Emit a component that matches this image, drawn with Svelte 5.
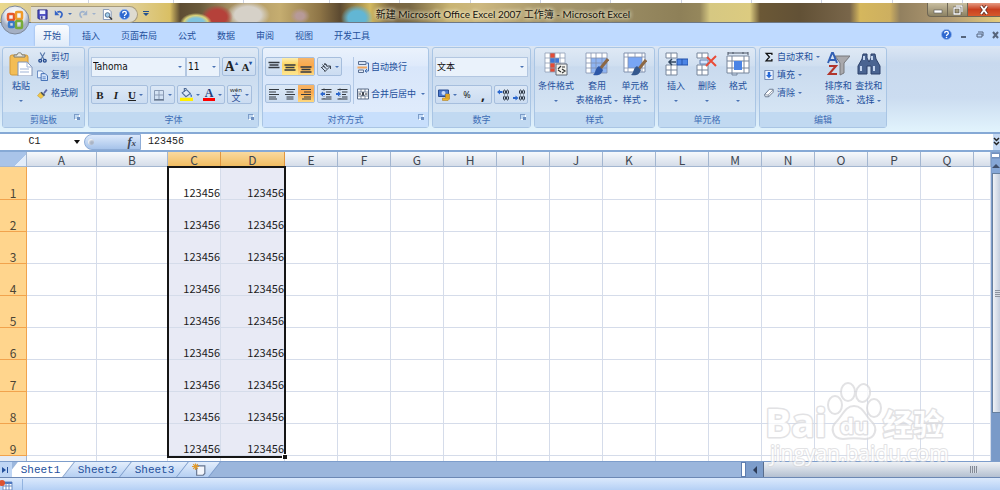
<script>
  const menus = ['开始', '插入', '页面布局', '公式', '数据', '审阅', '视图', '开发工具'];
  const letters = 'ABCDEFGHIJKLMNOPQ'.split('');
  const rows = [1, 2, 3, 4, 5, 6, 7, 8, 9];
  const picked = ['C', 'D'];
  const sheets = ['Sheet1', 'Sheet2', 'Sheet3'];

  let menu = $state('开始');
  let sheet = $state('Sheet1');
  let font = $state('Tahoma');
  let size = $state('11');
  let format = $state('文本');
  let cellName = $state('C1');
  let formula = $state('123456');
</script>

{#snippet icon(name, w = 12)}
  <svg class="icon" width={w} height={w} viewBox="0 0 24 24" fill="none" aria-hidden="true">
    {#if name === 'save'}
      <path d="M2 2h20v20H4l-2-2z" fill="#4d4fc4" stroke="#25257c" stroke-width="2" />
      <path d="M6 3h12v8H6z" fill="#eef3ff" /><path d="M7 15h11v7H7z" fill="#d8dcf0" /><path d="M9 16h3v5H9z" fill="#25257c" />
    {:else if name === 'undo'}
      <path d="M8 8c9-5 16 4 7 13" stroke="#3564c6" stroke-width="4" /><path d="M2 3v12h11z" fill="#3564c6" />
    {:else if name === 'redo'}
      <path d="M16 8C7 3 0 12 9 21" stroke="#9fb2cc" stroke-width="4" /><path d="M22 3v12H11z" fill="#9fb2cc" />
    {:else if name === 'preview'}
      <path d="M3 1h12l5 5v17H3z" fill="#fff" stroke="#7c90b4" stroke-width="2" />
      <circle cx="12" cy="13" r="5" fill="#a6d0ec" stroke="#4b6a8e" stroke-width="2" /><path d="m16 17 6 6" stroke="#333" stroke-width="3" />
    {:else if name === 'help'}
      <circle cx="12" cy="12" r="11" fill="#2d68d0" stroke="#8fb4ec" stroke-width="2" />
      <path d="M8 9c0-5 8-5 8 0 0 3-4 3-4 6" stroke="#fff" stroke-width="3" /><circle cx="12" cy="18.500" r="1.800" fill="#fff" />
    {:else if name === 'paste'}
      <rect x="1" y="3" width="18" height="20" rx="2" fill="#f3bd55" stroke="#d39a3b" />
      <path d="M5 5V3h3c0-3 5-3 5 0h3v2z" fill="#e8e8e0" stroke="#7b7b72" />
      <path d="M9 10h9l5 5v9H9z" fill="#fff" stroke="#8094b8" /><path d="M18 10v5h5M11 17h9M11 20h9" stroke="#9fb3d6" />
    {:else if name === 'cut'}
      <path d="m7 1 8 15M17 1 9 16" stroke="#5677aa" stroke-width="2.500" />
      <circle cx="7" cy="19" r="3" stroke="#244a8f" stroke-width="3" /><circle cx="17" cy="19" r="3" stroke="#244a8f" stroke-width="3" />
    {:else if name === 'copy'}
      <path d="M1 2h9l4 4v11H1z" fill="#eef5ff" stroke="#5e83bd" stroke-width="2" />
      <path d="M9 8h9l5 5v10H9z" fill="#d6e5fb" stroke="#3565af" stroke-width="2" /><path d="M12 15h7M12 19h7" stroke="#5180c6" stroke-width="2" />
    {:else if name === 'brush'}
      <path d="m14 10 6-8 3 3-7 8z" fill="#5a64a8" /><path d="m10 8 8 7-3 3-8-7z" fill="#45505e" /><path d="m7 10 7 8-5 5-8-6z" fill="#f2c849" stroke="#b98d24" />
    {:else if name === 'borders'}
      <path d="M3 3h18v18H3zM12 3v18M3 12h18" stroke="#8a9bb5" stroke-width="2" /><path d="M2 22h20" stroke="#46566e" stroke-width="2" />
    {:else if name === 'fill'}
      <path d="m4 9 8-6 7 7-8 6z" fill="#dce8f8" stroke="#4d6a96" stroke-width="2" /><path d="M8 7V1h4" stroke="#4d6a96" stroke-width="2" />
      <path d="M19 10c4 3 4 6 1 7z" fill="#2f63bb" /><path d="M0 18h24v6H0z" fill="#ffef00" />
    {:else if name === 'bars-top' || name === 'bars-mid' || name === 'bars-bottom'}
      <g transform="translate(0 {name === 'bars-top' ? 0 : name === 'bars-mid' ? 5 : 9})">
        <path d="M1 3h22M3 8h18M1 13h22" stroke="#333940" stroke-width="3" />
      </g>
    {:else if name === 'left'}
      <path d="M2 3h20M2 8h14M2 13h20M2 18h14M2 22h16" stroke="#333940" stroke-width="2.200" />
    {:else if name === 'center'}
      <path d="M2 3h20M5 8h14M2 13h20M5 18h14M5 22h14" stroke="#333940" stroke-width="2.200" />
    {:else if name === 'right'}
      <path d="M2 3h20M8 8h14M2 13h20M8 18h14M4 22h18" stroke="#333940" stroke-width="2.200" />
    {:else if name === 'angle'}
      <path d="m2 12 8 8M5 7l8 9M9 4l6 8M3 14c2-4 5-4 6-1M8 8c3-3 5-2 6 1" stroke="#3c444f" stroke-width="2" /><path d="m9 22 12-12M21 10v6M21 10h-6" stroke="#3c444f" stroke-width="2" />
    {:else if name === 'outdent' || name === 'indent'}
      <path d="M3 3h20M12 8h11M12 13h8M12 18h11M3 22h20" stroke="#333940" stroke-width="2.400" /><path d="M8 0v24" stroke="#333940" stroke-dasharray="2 2" />
      {#if name === 'outdent'}<path d="M0 12 6 7v3h4v4H6v3z" fill="#2b67cd" />{:else}<path d="m10 12-6-5v3H0v4h4v3z" fill="#2b67cd" />{/if}
    {:else if name === 'wrap'}
      <path d="M3 1h15v6H3z" fill="#d9e4f5" stroke="#5a6f91" stroke-width="2" /><path d="M1 11h19v4H1z" fill="#f1a65f" /><path d="M3 18h10v5H3z" fill="#e7eefa" stroke="#5a6f91" stroke-width="2" />
      <path d="M19 4h4v16h-7m4-4-4 4 4 3" stroke="#416cae" stroke-width="2" />
    {:else if name === 'merge'}
      <path d="M1 2h22v20H1z" fill="#fff" stroke="#596b87" stroke-width="2" /><path d="M1 8h22M1 16h22M8 2v6M16 2v6M8 16v6M16 16v6" stroke="#596b87" stroke-width="1.500" />
      <path d="m10 16 2-8 2 8M3 12h5m8 0h5" stroke="#222b38" stroke-width="2" />
    {:else if name === 'money'}
      <path d="M1 2h20v13H1z" fill="#4b79cd" stroke="#294d91" stroke-width="2" /><circle cx="11" cy="8" r="4" fill="#cbdcf7" />
      <path d="M15 10h8v10l-3 3H9v-5h6z" fill="#efb62e" stroke="#a6761a" /><path d="M15 14h8M15 18h8" stroke="#a6761a" />
    {:else if name === 'inc' || name === 'dec'}
      {#if name === 'inc'}
        <path d="m0 6 6-5v3h5v4H6v3z" fill="#2b67cd" />
      {:else}
        <path d="m11 18-6-5v3H0v4h5v3z" fill="#2b67cd" />
      {/if}
      <g stroke="#222c3a" stroke-width="2">
        <ellipse cx="15" cy="6" rx="2" ry="4" /><ellipse cx="21" cy="6" rx="2" ry="4" /><ellipse cx="15" cy="18" rx="2" ry="4" /><ellipse cx="21" cy="18" rx="2" ry="4" />
      </g>
    {:else if name === 'conditional'}
      <path d="M1 1h20v19H1z" fill="#fff" /><path d="M6 1h5v19H6z" fill="#e44b35" /><path d="M6 6h9v5H6z" fill="#3f76d6" />
      <path d="M1 1h20v19H1zM1 6h20M1 11h20M1 16h20M6 1v19M11 1v19M16 1v19" stroke="#8d9cb4" stroke-width=".8" />
      <path d="M12 12h11v11H12z" fill="#f3f3ee" stroke="#5e6675" /><path d="m14 17 3-3M14 18l3 2M18 15h3M18 17l3 2-3 2" stroke="#333" stroke-width="1.200" />
    {:else if name === 'table-style'}
      <path d="M1 1h21v20H1z" fill="#fff" /><path d="M6 6h16v15H6z" fill="#8fb4f2" /><path d="M1 1h21v20H1zM1 6h21M1 11h21M1 16h21M6 1v20M11 1v20M17 1v20" stroke="#8090ad" stroke-width=".8" />
      <path d="m23 7-8 10" stroke="#8c6844" stroke-width="3" /><path d="m14 14 4 4c-2 5-5 6-10 5 3-2 2-7 6-9z" fill="#2d57a7" />
    {:else if name === 'cell-style'}
      <path d="M1 1h21v19H1z" fill="#fff" stroke="#8090ad" /><path d="M5 5h14v11H5z" fill="#79a6f4" /><path d="M1 5h21M1 16h21M5 1v19M12 1v4M19 1v19M12 16v4" stroke="#8090ad" stroke-width=".8" />
      <path d="m23 8-8 10" stroke="#8c6844" stroke-width="3" /><path d="m14 14 4 4c-2 5-5 6-10 5 3-2 2-7 6-9z" fill="#34588e" />
    {:else if name === 'insert' || name === 'delete'}
      <path d="M2 1h11v5H2zM2 13h11v10H2zM7 1v5M7 13v10M2 18h11" fill="#fff" stroke="#77859b" />
      {#if name === 'insert'}
        <path d="M13 7h11v6H13z" fill="#4b84e5" stroke="#2553ab" /><path d="M18 7v6" stroke="#2553ab" /><path d="M12 10H6m2-3-3 3 3 3" stroke="#30455f" stroke-width="1.500" />
      {:else}
        <path d="M5 8h8v4H5z" fill="#d6e4fb" stroke="#6682b1" /><path d="m12 5 9 9M21 4l-10 10" stroke="#e94c38" stroke-width="2" />
      {/if}
    {:else if name === 'format'}
      <path d="M2 1h20M2 0v3M22 0v3M7 0v2M17 0v2" stroke="#4b5565" /><path d="M1 4h22v17H1z" fill="#fff" stroke="#77859b" /><path d="M6 4v19h5v-2M18 4v17M1 9h22M1 16h22" stroke="#77859b" />
      <path d="M8 9h8v9H8z" fill="#4b84e5" />
    {:else if name === 'sum'}
      <path d="M19 7V3H5l8 9-8 9h14v-4" stroke="#111" stroke-width="3" />
    {:else if name === 'fill-down'}
      <path d="M2 1h20v22H2z" fill="#eaf2ff" stroke="#5974a4" stroke-width="2" /><path d="M9 5h6v7h4l-7 8-7-8h4z" fill="#2568d9" />
    {:else if name === 'eraser'}
      <path d="M13 3h9v7L11 21H3l-2-5z" fill="#fff" stroke="#54657f" stroke-width="2" /><path d="m2 16 8 1 2 4M10 17 21 5" stroke="#54657f" stroke-width="1.500" />
    {:else if name === 'sort'}
      <path d="M9 4h15l-6 7v10l-4 2V11z" fill="#a9a9ad" stroke="#77787d" />
      <path d="m2 11 4-10h1l4 10M4 8h5" stroke="#315fb3" stroke-width="2" /><path d="M3 14h7L3 22h8" stroke="#b1352c" stroke-width="2" />
    {:else if name === 'find'}
      <path d="M6 2h4v4l2 4 2-4V2h4l1 5 4 7v8h-9v-8h-4v8H1v-8l4-7z" fill="#4a6491" stroke="#2c416b" /><path d="M7 4v4M4 14v5M15 4v4M17 14v5" stroke="#c5d6f0" stroke-width="2" />
    {:else if name === 'new-sheet'}
      <path d="M8 5h14v13l-3 3H8z" fill="#f3f6fc" stroke="#66758f" stroke-width="2" /><path d="M6 1v11M0 6h12M2 2l8 8M10 2l-8 8" stroke="#e09a2c" stroke-width="2" />
    {/if}
  </svg>
{/snippet}

{#snippet big(name, label, second)}
  <button class="big">
    {@render icon(name, 24)}
    <span>{label}</span>
    {#if second}<span>{second} <i class="arrow"></i></span>{:else}<span><i class="arrow"></i></span>{/if}
  </button>
{/snippet}

<div class="window">
  <div class="strip">
    <svg width="100%" height="3" aria-hidden="true">
      {#each [88, 173, 243, 329, 399, 470, 540, 610, 681, 751, 821, 892, 962] as x}
        <rect {x} width="1" height="3" fill="#cdd3e4" />
      {/each}
    </svg>
  </div>

  <header>
    <div class="quick">
      <div class="tools">
        <button aria-label="保存">{@render icon('save', 11)}</button>
        <button aria-label="撤销">{@render icon('undo', 10)}<i class="arrow"></i></button>
        <button aria-label="恢复">{@render icon('redo', 10)}<i class="arrow pale"></i></button>
        <button aria-label="打印预览">{@render icon('preview', 11)}</button>
        <button aria-label="帮助">{@render icon('help', 11)}</button>
      </div>
      <button class="more" aria-label="自定义"><i class="arrow"></i></button>
    </div>
    <h1>新建 Microsoft Office Excel 2007 工作簿 - Microsoft Excel</h1>
    <div class="controls">
      <button aria-label="最小化"><svg width="10" height="8"><rect x="1" y="4" width="8" height="3" fill="#fff" stroke="#555" stroke-width=".6" /></svg></button>
      <button aria-label="还原"><svg width="10" height="10" fill="none"><path d="M3 1h6v6M1 3h6v6H1z" stroke="#4d4a42" stroke-width="2.600" /><path d="M3 1h6v6M1 3h6v6H1z" stroke="#fff" stroke-width="1.300" /></svg></button>
      <button class="close" aria-label="关闭"><svg width="10" height="10"><path d="m2 1 6 8M8 1 2 9" stroke="#5b2a20" stroke-width="3.400" /><path d="m2 1 6 8M8 1 2 9" stroke="#fff" stroke-width="2" /></svg></button>
    </div>
    <button class="orb" aria-label="Office">
      <svg width="30" height="30" viewBox="0 0 30 30">
        <defs><radialGradient id="orb" cy=".3"><stop offset="0" stop-color="#fff" /><stop offset=".7" stop-color="#e2e6ee" /><stop offset="1" stop-color="#a5b0c4" /></radialGradient></defs>
        <circle cx="15" cy="15" r="14" fill="url(#orb)" stroke="#7d8899" />
        <g fill="none" stroke-width="2.500">
          <rect x="8" y="9" width="6" height="6" rx="1" stroke="#e5562a" /><rect x="16" y="7" width="6" height="7" rx="1" stroke="#ef9a2b" />
          <rect x="9" y="17" width="5" height="5" rx="1" stroke="#3a79c8" /><rect x="16" y="16" width="6" height="7" rx="1" stroke="#77ab3a" />
        </g>
      </svg>
    </button>
  </header>

  <nav>
    {#each menus as name}
      <button class:active={menu === name} onclick={() => (menu = name)}>{name}</button>
    {/each}
    <div class="book">
      <button aria-label="帮助">{@render icon('help', 11)}</button>
      <button aria-label="最小化窗口"><svg width="8" height="8"><path d="M1 6h5" stroke="#56657c" stroke-width="2" /></svg></button>
      <button aria-label="还原窗口"><svg width="8" height="8" fill="none" stroke="#56657c"><path d="M2 1h5v4M1 3h5v3H1z" /></svg></button>
      <button aria-label="关闭窗口"><svg width="8" height="8"><path d="m1 1 5 6M6 1 1 7" stroke="#56657c" stroke-width="2" /></svg></button>
    </div>
  </nav>

  <div class="ribbon">
    <section class="clipboard">
      <div class="body">
        {@render big('paste', '粘贴')}
        <div class="list">
          <button>{@render icon('cut', 11)}剪切</button>
          <button>{@render icon('copy', 11)}复制</button>
          <button>{@render icon('brush', 11)}格式刷</button>
        </div>
      </div>
      <h2>剪贴板<i class="launcher"></i></h2>
    </section>

    <section class="font">
      <div class="body lines">
        <div class="line">
          <div class="selects">
            <label class="select wide"><select aria-label="字体" bind:value={font}><option>Tahoma</option></select></label>
            <label class="select"><select aria-label="字号" bind:value={size}><option>11</option></select></label>
          </div>
          <div class="set"><button class="serif large">A<sup>▴</sup></button><button class="serif">A<sup>▾</sup></button></div>
        </div>
        <div class="line">
          <div class="set"><button class="serif"><b>B</b></button><button class="serif"><em>I</em></button><button class="serif under"><u>U</u><i class="arrow"></i></button></div>
          <div class="set"><button class="drop" aria-label="边框">{@render icon('borders')}<i class="arrow"></i></button></div>
          <div class="set"><button class="drop" aria-label="填充颜色">{@render icon('fill', 13)}<i class="arrow"></i></button><button class="drop serif"><span class="red">A</span><i class="arrow"></i></button></div>
          <div class="set"><button class="drop pinyin"><span><small>wén</small>文</span><i class="arrow"></i></button></div>
        </div>
      </div>
      <h2>字体<i class="launcher"></i></h2>
    </section>

    <section class="align hot">
      <div class="body split">
        <div class="lines">
          <div class="line">
            <div class="set"><button aria-label="顶端对齐">{@render icon('bars-top')}</button><button class="lit" aria-label="垂直居中">{@render icon('bars-mid')}</button><button class="on" aria-label="底端对齐">{@render icon('bars-bottom')}</button></div>
            <div class="set"><button class="drop" aria-label="方向">{@render icon('angle')}<i class="arrow"></i></button></div>
          </div>
          <div class="line">
            <div class="set"><button aria-label="左对齐">{@render icon('left')}</button><button aria-label="居中">{@render icon('center')}</button><button class="on" aria-label="右对齐">{@render icon('right')}</button></div>
            <div class="set"><button aria-label="减少缩进">{@render icon('outdent')}</button><button aria-label="增加缩进">{@render icon('indent')}</button></div>
          </div>
        </div>
        <div class="wrap">
          <button>{@render icon('wrap')}自动换行</button>
          <button>{@render icon('merge')}合并后居中<i class="arrow"></i></button>
        </div>
      </div>
      <h2>对齐方式<i class="launcher"></i></h2>
    </section>

    <section class="number">
      <div class="body lines">
        <label class="select full"><select aria-label="数字格式" bind:value={format}><option>文本</option></select></label>
        <div class="line">
          <div class="set"><button class="drop" aria-label="会计格式">{@render icon('money')}<i class="arrow"></i></button><button>%</button><button class="comma">,</button></div>
          <div class="set"><button aria-label="增加小数位数">{@render icon('inc')}</button><button aria-label="减少小数位数">{@render icon('dec')}</button></div>
        </div>
      </div>
      <h2>数字<i class="launcher"></i></h2>
    </section>

    <section class="styles">
      <div class="body">
        {@render big('conditional', '条件格式')}
        {@render big('table-style', '套用', '表格格式')}
        {@render big('cell-style', '单元格', '样式')}
      </div>
      <h2>样式</h2>
    </section>

    <section class="cells">
      <div class="body">
        {@render big('insert', '插入')}
        {@render big('delete', '删除')}
        {@render big('format', '格式')}
      </div>
      <h2>单元格</h2>
    </section>

    <section class="editing">
      <div class="body">
        <div class="list">
          <button>{@render icon('sum', 10)}自动求和<i class="arrow"></i></button>
          <button>{@render icon('fill-down', 10)}填充<i class="arrow"></i></button>
          <button>{@render icon('eraser', 10)}清除<i class="arrow"></i></button>
        </div>
        {@render big('sort', '排序和', '筛选')}
        {@render big('find', '查找和', '选择')}
      </div>
      <h2>编辑</h2>
    </section>
  </div>

  <div class="formula">
    <input class="name" aria-label="名称框" bind:value={cellName} />
    <i class="arrow dark"></i>
    <div class="fx"><span class="knob"></span><em>f<small>x</small></em></div>
    <input class="value" aria-label="编辑栏" bind:value={formula} />
    <button class="expand" aria-label="展开编辑栏"><svg width="7" height="10" fill="none" stroke="#222" stroke-width="1.500"><path d="m1 1 2.500 2.500L6 1M1 5l2.500 2.500L6 5" /></svg></button>
  </div>

  <main>
    <div class="sheet">
      <table>
        <colgroup>
          <col class="head" /><col class="a" /><col class="b" /><col class="c" /><col class="d" />
          {#each letters.slice(4) as letter (letter)}<col class="plain" />{/each}
          <col />
        </colgroup>
        <thead>
          <tr>
            <th class="corner"></th>
            {#each letters as letter}<th class:picked={picked.includes(letter)}>{letter}</th>{/each}
            <th></th>
          </tr>
        </thead>
        <tbody>
          {#each rows as row}
            <tr>
              <th>{row}</th>
              {#each letters as letter}
                <td class:picked={picked.includes(letter)} class:current={row === 1 && letter === 'C'}>{picked.includes(letter) ? '123456' : ''}</td>
              {/each}
              <td></td>
            </tr>
          {/each}
          <tr class="rest"><th></th>{#each letters as letter (letter)}<td></td>{/each}<td></td></tr>
        </tbody>
      </table>
      <div class="selection"></div>
    </div>
    <div class="vscroll">
      <div class="splitter"></div>
      <button aria-label="向上滚动"><i class="up"></i></button>
      <div class="thumb"><span></span></div>
      <div class="track"></div>
    </div>
  </main>

  <footer>
    <div class="sheets">
      <button class="last" aria-label="最后一张"><svg width="8" height="8"><path d="M0 1v6l4-3zM5 1h1v6H5z" fill="#24509c" /></svg></button>
      {#each sheets as name}
        <button class="tab" class:active={sheet === name} onclick={() => (sheet = name)}>{name}</button>
      {/each}
      <button class="tab new" aria-label="插入工作表">{@render icon('new-sheet', 14)}</button>
    </div>
    <div class="hscroll">
      <div class="grab"></div>
      <button aria-label="向左滚动"><i class="back"></i></button>
      <div class="thumb"><span></span></div>
    </div>
  </footer>
  <div class="status">
    <svg width="14" height="11" aria-hidden="true"><path d="M3 3h9v8H3z" fill="#fff" stroke="#6d8dc2" /><path d="M3 3h9v2H3z" fill="#4c76c0" /><path d="M6 4v7M9 4v7M3 7h9" stroke="#6d8dc2" /><circle cx="2" cy="4" r="3" fill="#dd5330" /></svg>
  </div>

  <svg class="watermark" width="190" height="90" viewBox="0 0 190 90">
    <g fill="#fff" stroke="#d9d9dc" stroke-width="2">
      <ellipse cx="71" cy="25" rx="7" ry="9" /><ellipse cx="84" cy="12" rx="7" ry="9" /><ellipse cx="99" cy="13" rx="7" ry="9" transform="rotate(12 99 13)" /><ellipse cx="110" cy="28" rx="7" ry="9" />
      <path d="M90 26c-9 0-11 9-17 15-8 7-4 18 6 18 8-1 14-1 22 0 10 0 14-11 6-18-6-6-8-15-17-15z" />
    </g>
    <g fill="#fff" stroke="#d9d9dc" stroke-width="3" paint-order="stroke" stroke-linejoin="round" font-weight="700">
      <text x="1" y="57" font-family="Open Sans, sans-serif" font-size="39">Bai</text>
      <text x="76" y="54" font-family="Open Sans, sans-serif" font-size="22">du</text>
      <text x="119" y="55" font-family="Noto Sans CJK SC, sans-serif" font-size="30">经验</text>
      <text x="6" y="81" font-family="Open Sans, sans-serif" font-size="21" font-weight="400" stroke-width="2">jingyan.baidu.com</text>
    </g>
  </svg>
</div>

<style>
  :global(body) {
    margin: 0;
  }
  .window {
    position: relative;
    display: flex;
    flex-direction: column;
    height: 100vh;
    overflow: hidden;
    font-family: 'Noto Sans', 'Noto Sans CJK SC', sans-serif;
    font-size: 9px;
    line-height: 14px;
    color: #24509c;
    background: #bfdbff;
  }
  button, input, select {
    box-sizing: border-box;
    margin: 0;
    padding: 0;
    border: 0;
    border-radius: 0;
    background: none;
    font: inherit;
    color: inherit;
  }
  button {
    display: flex;
    align-items: center;
    justify-content: center;
    white-space: nowrap;
  }
  h1, h2 {
    margin: 0;
    font-weight: 400;
  }
  .icon {
    flex: none;
  }
  .arrow {
    display: inline-block;
    flex: none;
    width: 0;
    border: 2px solid transparent;
    border-top-color: #4a73b4;
    border-bottom: 0;
    vertical-align: middle;
  }
  .arrow.pale {
    border-top-color: #9fb2cc;
  }
  .arrow.dark {
    border-width: 4px 3px 0;
    border-top-color: #111;
  }

  .strip {
    height: 3px;
    background: #fff;
    line-height: 0;
  }
  header {
    position: relative;
    display: grid;
    grid-template-columns: 1fr auto 1fr;
    height: 20px;
    box-sizing: border-box;
    border-bottom: 1px solid #6d7886;
    background:
      radial-gradient(ellipse 16px 10px at 196px 20px, #7fc3dd 50%, #d9d27a 75%, transparent),
      radial-gradient(ellipse 16px 12px at 217px 14px, #b5413a 60%, transparent),
      radial-gradient(ellipse 22px 14px at 248px 12px, #d6d1c8 60%, transparent),
      radial-gradient(ellipse 10px 8px at 300px 13px, #b79a98 40%, transparent),
      radial-gradient(ellipse 16px 13px at 357px 15px, #62b6d4 55%, transparent),
      linear-gradient(90deg, #ead98c 0, #d8c795 4%, #e2d4a5 12%, #d9bf64 17%, #5e4d33 18%, #6a5a3b 20%, #a58f62 23%, #c5ad70 28%, #8d7446 32%, #5c4a31 34%, #d3b95f 37%, #7c6742 39%, #7a6945 41%, #c9b472 45%, #cdb87f 48%, #a9986a 54%, #a09269 58%, #8e8058 68%, #95875c 70%, #d6c882 71%, #dccb80 75%, #6b5836 76%, #625136 80%, #79664a 85%, #d5b75d 86%, #cdaf60 89%, #92805f 90%, #b39c73 95%, #e4cc7c 100%);
  }
  .quick {
    display: flex;
    align-items: center;
    padding-left: 31px;
  }
  .tools {
    display: flex;
    align-items: center;
    gap: 6px;
    height: 15px;
    padding: 0 7px 0 6px;
    border: 1px solid #a89c7c;
    border-left: 0;
    border-radius: 0 9px 9px 0;
    background: #dedbd0;
  }
  .tools button {
    gap: 4px;
  }
  .more {
    padding-left: 5px;
  }
  .more .arrow {
    border-width: 3px 3px 0;
    border-top-color: #24508f;
  }
  .more::before {
    content: '';
    width: 6px;
    height: 1px;
    margin: -6px -6px 0 0;
    background: #24508f;
  }
  h1 {
    padding-left: 6px;
    font-family: Lato, 'Noto Sans CJK SC', sans-serif;
    font-size: 10px;
    line-height: 22px;
    color: #16130d;
    text-shadow: 0 0 4px #fff8dc, 0 0 4px #fff8dc;
    white-space: nowrap;
  }
  .controls {
    display: flex;
    justify-content: flex-end;
  }
  .controls button {
    width: 20px;
    height: 14px;
    border: 1px solid #6f6755;
    border-top: 0;
    border-right: 0;
    background: linear-gradient(#c8bea0, #8d8263);
  }
  .controls button:first-child {
    border-radius: 0 0 0 4px;
  }
  .controls .close {
    width: 33px;
    background: linear-gradient(#e59b83, #c9401f 50%, #d65a2c);
  }
  .orb {
    position: absolute;
    left: 0;
    top: 2px;
    z-index: 1;
  }

  nav {
    display: flex;
    gap: 5px;
    height: 23px;
    padding-left: 35px;
    background: #bfdaff;
  }
  nav > button {
    height: 21px;
    margin-top: 2px;
    padding: 0 8px;
  }
  nav > .active {
    border-radius: 3px 3px 0 0;
    background: linear-gradient(#fafcff, #e0ebf9);
    box-shadow: 0 0 2px #7da3d6;
  }
  .book {
    display: flex;
    align-items: center;
    gap: 8px;
    margin-left: auto;
  }

  .ribbon {
    display: flex;
    gap: 3px;
    height: 81px;
    padding: 1px 2px 4px;
    background: linear-gradient(#dbe6f4, #c8d9ee 20%, #cbdcf0 60%, #e2f4fd);
  }
  section {
    display: flex;
    flex-direction: column;
    flex: none;
    box-sizing: border-box;
    border: 1px solid #a9c5e4;
    border-radius: 3px;
    background: linear-gradient(#dfe9f5, #d0dff0 22%, #c9daee 24%, #d9e8f6);
  }
  section.hot {
    background: linear-gradient(#eaf2fc, #dfeafb 22%, #d8e6fa 24%, #e2edfc);
  }
  .hot h2 {
    background: #c8dffc;
  }
  .clipboard { width: 83px; }
  .font { width: 171px; }
  .align { width: 167px; }
  .number { width: 99px; }
  .styles { width: 121px; }
  .cells { width: 98px; }
  .editing { width: 128px; }
  .body {
    display: flex;
    flex: 1;
    padding: 0 2px;
  }
  h2 {
    position: relative;
    height: 15px;
    font-size: 9px;
    line-height: 15px;
    text-align: center;
    color: #3e6db5;
    background: #c1d9f1;
  }
  .launcher {
    position: absolute;
    right: 4px;
    top: 2px;
    width: 4px;
    height: 4px;
    border: 1px solid #7c9cc8;
    border-right-color: #fff;
    border-bottom-color: #fff;
  }
  .launcher::after {
    content: '';
    position: absolute;
    right: -1px;
    bottom: -1px;
    width: 3px;
    height: 3px;
    background: #6d8fc0;
  }
  .big {
    flex-direction: column;
    justify-content: flex-start;
    padding-top: 4px;
  }
  .big .icon {
    margin-bottom: 3px;
  }
  .big span {
    height: 14px;
  }
  .clipboard .big {
    width: 32px;
  }
  .list {
    display: grid;
    grid-auto-rows: 18px;
    justify-items: start;
    align-content: start;
  }
  .list button {
    gap: 3px;
  }
  .styles .body {
    display: grid;
    grid-template-columns: 38px 44px 32px;
  }
  .cells .body {
    display: grid;
    grid-template-columns: 30px 32px 30px;
  }
  .editing .list {
    width: 60px;
    padding-left: 2px;
  }
  .editing .big {
    width: 31px;
  }

  .lines {
    display: flex;
    flex-direction: column;
    gap: 8px;
  }
  .body.lines, .body.split {
    padding-top: 9px;
  }
  .line {
    display: flex;
    gap: 2px;
  }
  .selects {
    display: flex;
    width: 132px;
  }
  .select {
    position: relative;
    box-sizing: border-box;
    height: 20px;
    border: 1px solid #b3c7e1;
    background: #eaf2fb;
    color: #111;
  }
  .select.wide {
    flex: 1;
  }
  .select:not(.wide):not(.full) {
    width: 34px;
  }
  .select::after {
    content: '';
    position: absolute;
    right: 3px;
    top: 8px;
    border: 2px solid transparent;
    border-top-color: #4a73b4;
    border-bottom: 0;
  }
  select {
    display: block;
    width: 100%;
    height: 18px;
    padding-left: 1px;
    appearance: none;
    font-family: 'DejaVu Sans Condensed', 'Noto Sans CJK SC', sans-serif;
    font-size: 10px;
    line-height: 18px;
  }
  .full select {
    font-size: 9px;
  }
  .set {
    display: flex;
    box-sizing: border-box;
    height: 19px;
    border: 1px solid #a6bedd;
    border-radius: 2px;
    background: linear-gradient(#dce8f6, #cbdcf1);
  }
  .set button {
    width: 16px;
    color: #222;
  }
  .set .drop, .set .under {
    width: 23px;
    gap: 3px;
  }
  .serif {
    font-family: 'Liberation Serif', serif;
    font-size: 11px;
    font-weight: 700;
  }
  .comma {
    font-size: 14px;
    font-weight: 700;
  }
  .large {
    font-size: 14px;
  }
  sup {
    font-size: 6px;
    line-height: 6px;
    align-self: flex-start;
    margin-top: 2px;
    color: #24509c;
  }
  .red {
    width: 12px;
    height: 13px;
    box-sizing: border-box;
    border-bottom: 3px solid #f00;
    font-size: 12px;
    line-height: 10px;
    color: #24407c;
  }
  .pinyin span {
    display: flex;
    flex-direction: column;
    align-items: center;
    line-height: 10px;
    color: #2c4e95;
  }
  .pinyin small {
    font-size: 6px;
    line-height: 6px;
    color: #222;
  }
  .lit {
    background: linear-gradient(#fdeeb0, #fcd45f 40%, #fee58f);
  }
  .on {
    background: linear-gradient(#f6b56a, #fba94b 45%, #fed980);
  }
  .split {
    gap: 3px;
  }
  .split .lines {
    padding-right: 2px;
    margin-bottom: 8px;
    border-right: 1px solid #b3c9e6;
  }
  .wrap {
    display: grid;
    grid-auto-rows: 19px;
    gap: 8px;
    justify-items: start;
    align-content: start;
  }
  .wrap button {
    gap: 2px;
  }
  .wrap .arrow {
    margin-left: 3px;
  }

  .formula {
    display: flex;
    align-items: center;
    height: 16px;
    border-top: 2px solid #86a9d5;
    border-bottom: 2px solid #86a9d5;
    background: #fff;
    font-family: 'Liberation Mono', 'Noto Sans CJK SC', monospace;
    font-size: 10px;
    color: #222;
  }
  .name {
    width: 74px;
    padding-right: 5px;
    text-align: center;
  }
  .fx {
    display: flex;
    align-items: center;
    justify-content: space-between;
    box-sizing: border-box;
    width: 57px;
    height: 16px;
    margin-left: 4px;
    padding: 0 4px 0 3px;
    border: 1px solid #8eacd6;
    border-radius: 8px 0 0 8px;
    background: linear-gradient(#dce9fb, #a6c3ea);
    font-family: 'Liberation Serif', serif;
    font-size: 12px;
    font-weight: 700;
    color: #3d4454;
  }
  .fx small {
    font-size: 9px;
  }
  .knob {
    width: 6px;
    height: 6px;
    border-radius: 50%;
    background: #a9b4c6;
    box-shadow: inset 1px 1px 2px #fff;
  }
  .value {
    flex: 1;
    padding-left: 7px;
  }
  .expand {
    width: 7px;
    height: 16px;
    background: #c5d9f3;
  }

  main {
    display: flex;
    flex: 1;
    min-height: 0;
  }
  .sheet {
    position: relative;
    flex: 1;
    min-width: 0;
    overflow: hidden;
    background: #fff;
  }
  table {
    width: 100%;
    table-layout: fixed;
    border-spacing: 0;
    font-family: 'Noto Sans CJK SC', sans-serif;
    font-size: 11px;
    line-height: 13px;
    color: #1c1c1c;
  }
  .head { width: 27px; }
  .a { width: 70px; }
  .b { width: 71px; }
  .c { width: 53px; }
  .d { width: 64px; }
  .plain { width: 53px; }
  th, td {
    box-sizing: border-box;
    height: 32px;
    padding: 0;
    border-right: 1px solid #d5dcea;
    border-bottom: 1px solid #d5dcea;
    font-weight: 400;
    vertical-align: bottom;
  }
  td {
    text-align: right;
  }
  tbody tr:first-child > * {
    height: 33px;
  }
  thead th {
    height: 15px;
    border-color: #a3b6d0;
    background: linear-gradient(#f6f9fc, #d5dde9);
    font-size: 12px;
    color: #3d4650;
    vertical-align: middle;
  }
  thead th.picked {
    border-color: #e0963f;
    background: linear-gradient(#f9d99f, #f1bd62);
  }
  thead .corner {
    background: linear-gradient(135deg, transparent 70%, #e3edfa 71%), #a9c4e9;
  }
  tbody th {
    border-color: #f1a34d;
    background: #ffd58d;
    font-size: 12px;
    color: #4b4435;
    text-align: center;
  }
  td.picked {
    background: #e8eaf5;
  }
  td.current {
    background: #fff;
  }
  .rest th {
    border-color: #a3b6d0;
    background: #e6ecf5;
  }
  .selection {
    position: absolute;
    left: 167px;
    top: 14px;
    width: 115px;
    height: 288px;
    border: 2px solid #151515;
  }
  .selection::after {
    content: '';
    position: absolute;
    right: -3px;
    bottom: -3px;
    width: 4px;
    height: 4px;
    border-top: 1px solid #fff;
    border-left: 1px solid #fff;
    background: #151515;
  }
  .watermark {
    position: absolute;
    right: 46px;
    bottom: 20px;
    opacity: .75;
    pointer-events: none;
  }
  .vscroll {
    display: flex;
    flex-direction: column;
    width: 8px;
    border-left: 1px solid #7d9dcb;
    background: #7a9ac8;
  }
  .splitter {
    height: 3px;
    margin: 1px 0;
    border: 1px solid #7390bb;
    border-left: 0;
    background: #fff;
  }
  .vscroll button {
    height: 14px;
    background: #86a7d6;
  }
  .up {
    border: 4px solid transparent;
    border-top: 0;
    border-bottom: 4px solid #40506c;
  }
  .vscroll .thumb {
    display: flex;
    align-items: center;
    flex: 5;
    background: linear-gradient(90deg, #f0f2f6, #c3cddd);
    border: 1px solid #67809f;
    border-right: 0;
  }
  .vscroll .thumb span {
    width: 5px;
    height: 7px;
    margin-left: 2px;
    background: repeating-linear-gradient(#8d949f 0 1px, #d6dbe3 1px 2px);
  }
  .track {
    flex: 1;
  }

  footer {
    display: flex;
    height: 15px;
    border-top: 1px solid #7d9dcb;
    border-bottom: 1px solid #6c88b4;
    background: #9bb6dc;
  }
  .sheets {
    display: flex;
    flex: 1;
  }
  .last {
    z-index: 2;
    width: 12px;
    background: #bfd6f5;
  }
  .tab {
    position: relative;
    z-index: 0;
    width: 57px;
    font-family: 'Liberation Mono', monospace;
    font-size: 11px;
  }
  .tab::before {
    content: '';
    position: absolute;
    inset: 0;
    z-index: -1;
    border-right: 1px solid #7d9dcb;
    background: linear-gradient(#e3eefc, #b5cff2);
    transform: skewX(-38deg);
  }
  .tab.active {
    z-index: 1;
  }
  .tab.active::before {
    background: #fff;
  }
  .tab.new {
    width: 32px;
  }
  .hscroll {
    display: flex;
    flex: 0 0 26%;
    box-sizing: border-box;
  }
  .grab {
    width: 3px;
    margin-left: 1px;
    border: 1px solid #5e7eb0;
    background: #fff;
  }
  .hscroll button {
    width: 17px;
    background: #7d9dcb;
  }
  .back {
    border: 4px solid transparent;
    border-left: 0;
    border-right: 4px solid #2d3c58;
  }
  .hscroll .thumb {
    display: flex;
    flex: 1;
    align-items: center;
    justify-content: flex-end;
    padding-right: 22px;
    border-left: 1px solid #596d8c;
    background: linear-gradient(#eef1f5, #b4c0d1);
  }
  .hscroll .thumb span {
    width: 8px;
    height: 7px;
    background: repeating-linear-gradient(90deg, #838a96 0 1px, #d6dbe3 1px 2px);
  }
  .status {
    height: 12px;
    flex: none;
    line-height: 0;
    background: linear-gradient(#dbe9fc, #b5d0f5);
  }
  .status svg {
    padding-right: 8px;
    margin-top: 1px;
    border-right: 1px solid #93b4e0;
  }
</style>
